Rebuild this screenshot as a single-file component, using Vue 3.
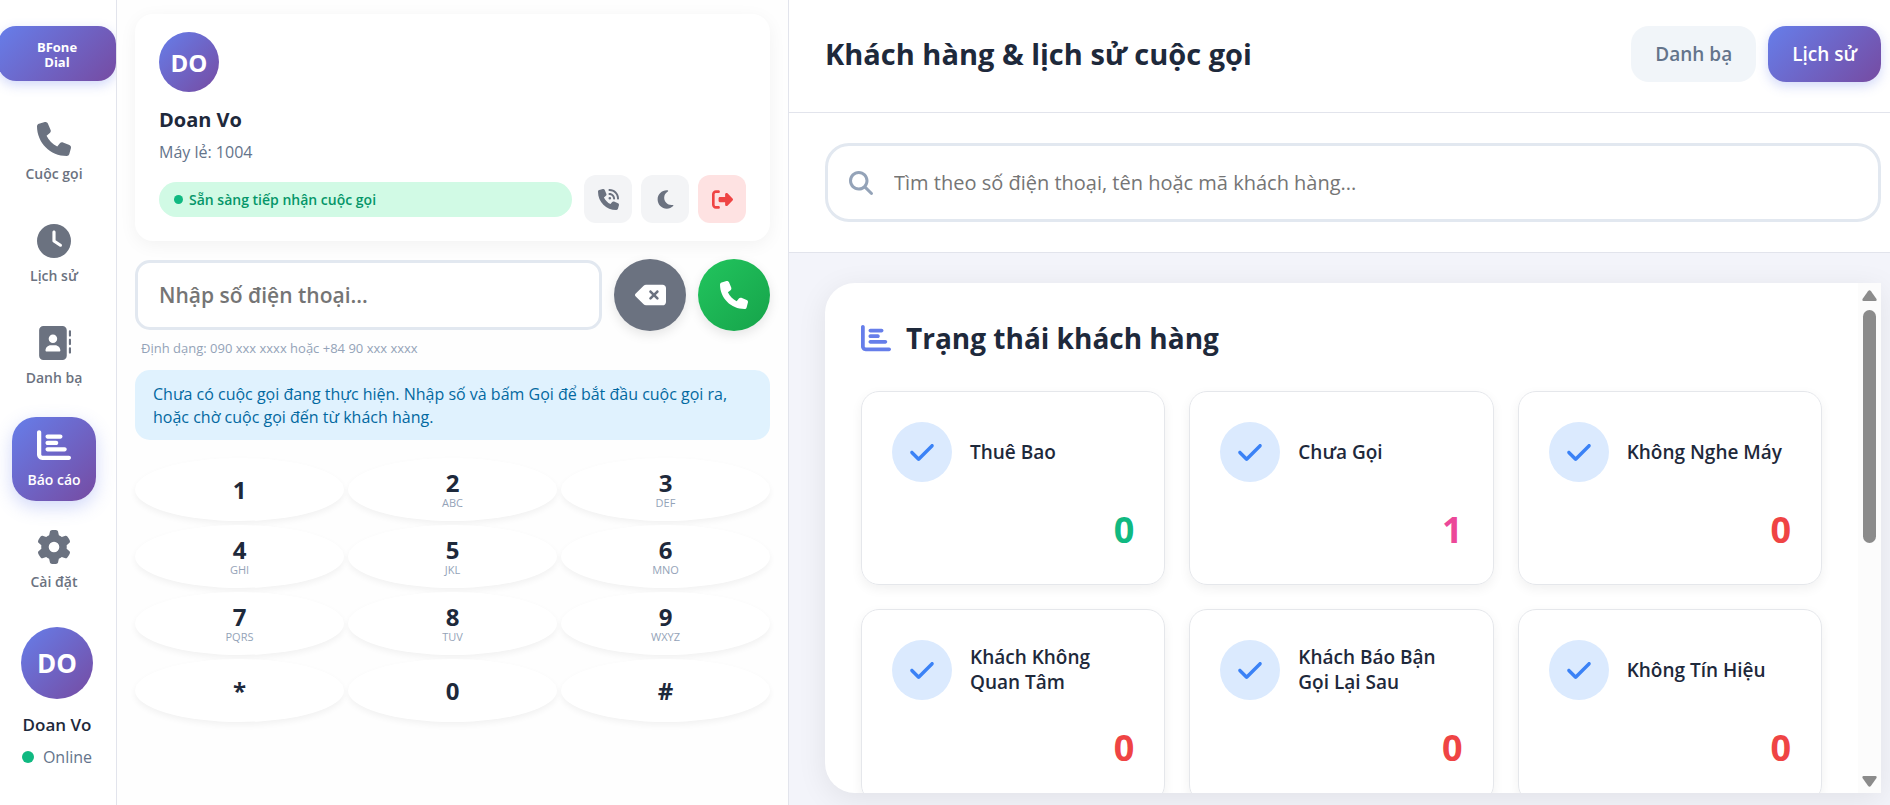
<template>
  <div class="app-shell">
    <aside class="sidebar">
      <div class="brand">BFone<br />Dial</div>

      <nav class="nav">
        <button
          v-for="item in navItems"
          :key="item.label"
          type="button"
          class="nav-item"
          :class="{ active: item.label === activeNav }"
          @click="activeNav = item.label"
        >
          <svg class="nav-icon" viewBox="0 0 512 512" aria-hidden="true"><path :d="icons[item.icon]" /></svg>
          <span>{{ item.label }}</span>
        </button>
      </nav>

      <div class="avatar avatar-lg">DO</div>
      <div class="sidebar-name">Doan Vo</div>
      <div class="sidebar-status"><span class="online-dot"></span>Online</div>
    </aside>

    <section class="dialer">
      <div class="agent-card">
        <div class="avatar">DO</div>
        <div class="agent-name">Doan Vo</div>
        <div class="agent-ext">Máy lẻ: 1004</div>
        <div class="agent-row">
          <div class="agent-state"><span class="state-dot"></span>Sẵn sàng tiếp nhận cuộc gọi</div>
          <div class="agent-actions">
            <button type="button" class="action" aria-label="Nhận cuộc gọi">
              <svg class="action-icon" viewBox="0 0 512 512" aria-hidden="true"><path :d="icons.phoneVolume" /></svg>
            </button>
            <button type="button" class="action" aria-label="Tạm nghỉ">
              <svg class="action-icon" viewBox="-64 0 512 512" aria-hidden="true"><path :d="icons.moon" /></svg>
            </button>
            <button type="button" class="action danger" aria-label="Đăng xuất">
              <svg class="action-icon" viewBox="0 0 512 512" aria-hidden="true"><path :d="icons.logout" /></svg>
            </button>
          </div>
        </div>
      </div>

      <div class="dial-row">
        <input
          v-model="number"
          class="dial-input"
          type="tel"
          placeholder="Nhập số điện thoại..."
          aria-label="Số điện thoại"
        />
        <button type="button" class="round" aria-label="Xóa" @click="number = number.slice(0, -1)">
          <svg class="erase-icon" viewBox="0 0 576 512" aria-hidden="true"><path :d="icons.erase" /></svg>
        </button>
        <button type="button" class="round call" aria-label="Gọi">
          <svg class="call-icon" viewBox="0 0 512 512" aria-hidden="true"><path :d="icons.phone" /></svg>
        </button>
      </div>
      <div class="dial-hint">Định dạng: 090 xxx xxxx hoặc +84 90 xxx xxxx</div>

      <div class="call-info">
        Chưa có cuộc gọi đang thực hiện. Nhập số và bấm Gọi để bắt đầu cuộc gọi ra,
        hoặc chờ cuộc gọi đến từ khách hàng.
      </div>

      <div class="keypad">
        <button v-for="key in keys" :key="key.digit" type="button" class="key" @click="number += key.digit">
          <span class="key-digit">{{ key.digit }}</span>
          <span v-if="key.letters" class="key-letters">{{ key.letters }}</span>
        </button>
      </div>
    </section>

    <main class="main">
      <header class="main-header">
        <h1>Khách hàng &amp; lịch sử cuộc gọi</h1>
        <div class="tabs">
          <button type="button" class="tab">Danh bạ</button>
          <button type="button" class="tab active">Lịch sử</button>
        </div>
      </header>

      <div class="search-bar">
        <label class="search">
          <svg class="search-icon" viewBox="0 0 512 512" aria-hidden="true"><path :d="icons.search" /></svg>
          <input
            v-model="query"
            type="text"
            placeholder="Tìm theo số điện thoại, tên hoặc mã khách hàng..."
            aria-label="Tìm kiếm khách hàng"
          />
        </label>
      </div>

      <div class="content">
        <div class="panel">
          <div class="panel-body">
            <h2>
              <svg class="title-icon" viewBox="0 0 512 512" aria-hidden="true"><path :d="icons.chart" /></svg>
              Trạng thái khách hàng
            </h2>
            <div class="status-grid">
              <div v-for="status in statuses" :key="status.label" class="status-card">
                <div class="status-head">
                  <span class="status-icon">
                    <svg viewBox="0 0 448 512" aria-hidden="true"><path :d="icons.check" /></svg>
                  </span>
                  <span class="status-label">{{ status.label }}</span>
                </div>
                <div class="status-count" :class="status.tone">{{ status.count }}</div>
              </div>
            </div>
          </div>
          <div class="scrollbar" aria-hidden="true">
            <svg class="scroll-arrow" viewBox="0 0 15 11"><path d="M6 1.2Q7.5-.6 9 1.2L14.5 9Q15 11 13.5 11H1.5Q0 11 .5 9Z" /></svg>
            <div class="scroll-track"><div class="scroll-thumb"></div></div>
            <svg class="scroll-arrow" viewBox="0 0 15 11"><path d="M6 9.8Q7.5 11.6 9 9.8L14.5 2Q15 0 13.5 0H1.5Q0 0 .5 2Z" /></svg>
          </div>
        </div>
      </div>
    </main>
  </div>
</template>

<script setup>
import { ref } from "vue";

const activeNav = ref("Báo cáo");
const number = ref("");
const query = ref("");

const navItems = [
  { label: "Cuộc gọi", icon: "phone" },
  { label: "Lịch sử", icon: "clock" },
  { label: "Danh bạ", icon: "book" },
  { label: "Báo cáo", icon: "chart" },
  { label: "Cài đặt", icon: "gear" },
];

const keys = [
  { digit: "1", letters: "" },
  { digit: "2", letters: "ABC" },
  { digit: "3", letters: "DEF" },
  { digit: "4", letters: "GHI" },
  { digit: "5", letters: "JKL" },
  { digit: "6", letters: "MNO" },
  { digit: "7", letters: "PQRS" },
  { digit: "8", letters: "TUV" },
  { digit: "9", letters: "WXYZ" },
  { digit: "*", letters: "" },
  { digit: "0", letters: "" },
  { digit: "#", letters: "" },
];

const statuses = [
  { label: "Thuê Bao", count: 0, tone: "green" },
  { label: "Chưa Gọi", count: 1, tone: "pink" },
  { label: "Không Nghe Máy", count: 0, tone: "red" },
  { label: "Khách Không Quan Tâm", count: 0, tone: "red" },
  { label: "Khách Báo Bận Gọi Lại Sau", count: 0, tone: "red" },
  { label: "Không Tín Hiệu", count: 0, tone: "red" },
];

const icons = {
  phone:
    "M164.9 24.6c-7.7-18.6-28-28.5-47.4-23.2l-88 24C12.1 30.2 0 46 0 64C0 311.4 200.6 512 448 512c18 0 33.8-12.1 38.6-29.5l24-88c5.3-19.4-4.6-39.7-23.2-47.4l-96-40c-16.3-6.8-35.2-2.1-46.3 11.6L304.7 368C234.3 334.7 177.3 277.7 144 207.3L193.3 167c13.7-11.2 18.4-30 11.6-46.3l-40-96z",
  clock:
    "M256 0a256 256 0 1 1 0 512A256 256 0 1 1 256 0zM232 120V256c0 8 4 15.5 10.7 20l96 64c11 7.4 25.9 4.4 33.3-6.7s4.4-25.9-6.7-33.3L280 243.2V120c0-13.3-10.7-24-24-24s-24 10.7-24 24z",
  book:
    "M96 0C60.7 0 32 28.7 32 64V448c0 35.3 28.7 64 64 64H384c35.3 0 64-28.7 64-64V64c0-35.3-28.7-64-64-64H96zM208 288h64c44.2 0 80 35.8 80 80c0 8.8-7.2 16-16 16H144c-8.8 0-16-7.2-16-16c0-44.2 35.8-80 80-80zm-32-96a64 64 0 1 1 128 0 64 64 0 1 1 -128 0zM512 80c0-8.8-7.2-16-16-16s-16 7.2-16 16v64c0 8.8 7.2 16 16 16s16-7.2 16-16V80zM496 192c-8.8 0-16 7.2-16 16v64c0 8.8 7.2 16 16 16s16-7.2 16-16V208c0-8.8-7.2-16-16-16zm16 144c0-8.8-7.2-16-16-16s-16 7.2-16 16v64c0 8.8 7.2 16 16 16s16-7.2 16-16V336z",
  chart:
    "M32 32c17.7 0 32 14.3 32 32V400c0 8.8 7.2 16 16 16H480c17.7 0 32 14.3 32 32s-14.3 32-32 32H80c-44.2 0-80-35.8-80-80V64C0 46.3 14.3 32 32 32zm96 96c0-17.7 14.3-32 32-32l192 0c17.7 0 32 14.3 32 32s-14.3 32-32 32l-192 0c-17.7 0-32-14.3-32-32zm32 64H288c17.7 0 32 14.3 32 32s-14.3 32-32 32H160c-17.7 0-32-14.3-32-32s14.3-32 32-32zm0 96H416c17.7 0 32 14.3 32 32s-14.3 32-32 32H160c-17.7 0-32-14.3-32-32s14.3-32 32-32z",
  gear:
    "M495.9 166.6c3.2 8.7 .5 18.4-6.4 24.6l-43.3 39.4c1.1 8.3 1.7 16.8 1.7 25.4s-.6 17.1-1.7 25.4l43.3 39.4c6.9 6.2 9.6 15.9 6.4 24.6c-4.4 11.9-9.7 23.3-15.8 34.3l-4.7 8.1c-6.6 11-14 21.4-22.1 31.2c-5.9 7.2-15.7 9.6-24.5 6.8l-55.7-17.7c-13.4 10.3-28.2 18.9-44 25.4l-12.5 57.1c-2 9.1-9 16.3-18.2 17.8c-13.8 2.3-28 3.5-42.5 3.5s-28.7-1.2-42.5-3.5c-9.2-1.5-16.2-8.7-18.2-17.8l-12.5-57.1c-15.8-6.5-30.6-15.1-44-25.4L83.1 425.9c-8.8 2.8-18.6 .3-24.5-6.8c-8.1-9.8-15.5-20.2-22.1-31.2l-4.7-8.1c-6.1-11-11.4-22.4-15.8-34.3c-3.2-8.7-.5-18.4 6.4-24.6l43.3-39.4C64.6 273.1 64 264.6 64 256s.6-17.1 1.7-25.4L22.4 191.2c-6.9-6.2-9.6-15.9-6.4-24.6c4.4-11.9 9.7-23.3 15.8-34.3l4.7-8.1c6.6-11 14-21.4 22.1-31.2c5.9-7.2 15.7-9.6 24.5-6.8l55.7 17.7c13.4-10.3 28.2-18.9 44-25.4l12.5-57.1c2-9.1 9-16.3 18.2-17.8C227.3 1.2 241.5 0 256 0s28.7 1.2 42.5 3.5c9.2 1.5 16.2 8.7 18.2 17.8l12.5 57.1c15.8 6.5 30.6 15.1 44 25.4l55.7-17.7c8.8-2.8 18.6-.3 24.5 6.8c8.1 9.8 15.5 20.2 22.1 31.2l4.7 8.1c6.1 11 11.4 22.4 15.8 34.3zM256 336a80 80 0 1 0 0-160 80 80 0 1 0 0 160z",
  phoneVolume:
    "M280 0C408.1 0 512 103.9 512 232c0 13.3-10.7 24-24 24s-24-10.7-24-24c0-101.6-82.4-184-184-184c-13.3 0-24-10.7-24-24s10.7-24 24-24zm8 192a32 32 0 1 1 0 64 32 32 0 1 1 0-64zm-32-72c0-13.3 10.7-24 24-24c75.1 0 136 60.9 136 136c0 13.3-10.7 24-24 24s-24-10.7-24-24c0-48.6-39.4-88-88-88c-13.3 0-24-10.7-24-24zM117.5 1.4c19.4-5.3 39.7 4.6 47.4 23.2l40 96c6.8 16.3 2.1 35.2-11.6 46.3L144 207.3c33.3 70.4 90.3 127.4 160.7 160.7L345 318.7c11.2-13.7 30-18.4 46.3-11.6l96 40c18.6 7.7 28.5 28 23.2 47.4l-24 88C481.8 499.9 466 512 448 512C200.6 512 0 311.4 0 64C0 46 12.1 30.2 29.5 25.4l88-24z",
  moon:
    "M223.5 32C100 32 0 132.3 0 256S100 480 223.5 480c60.6 0 115.5-24.2 155.8-63.4c5-4.9 6.3-12.5 3.1-18.7s-10.1-9.7-17-8.5c-9.8 1.7-19.8 2.6-30.1 2.6c-96.9 0-175.5-78.8-175.5-176c0-65.8 36-123.1 89.3-153.3c6.1-3.5 9.2-10.5 7.7-17.3s-7.3-11.9-14.3-12.5c-6.3-.5-12.6-.8-19-.8z",
  logout:
    "M377.9 105.9L500.7 228.7c7.2 7.2 11.3 17.1 11.3 27.3s-4.1 20.1-11.3 27.3L377.9 406.1c-6.4 6.4-15 9.9-24 9.9c-18.7 0-33.9-15.2-33.9-33.9l0-62.1-128 0c-17.7 0-32-14.3-32-32l0-64c0-17.7 14.3-32 32-32l128 0 0-62.1c0-18.7 15.2-33.9 33.9-33.9c9 0 17.6 3.6 24 9.9zM160 96L96 96c-17.7 0-32 14.3-32 32l0 256c0 17.7 14.3 32 32 32l64 0c17.7 0 32 14.3 32 32s-14.3 32-32 32l-64 0c-53 0-96-43-96-96L0 128C0 75 43 32 96 32l64 0c17.7 0 32 14.3 32 32s-14.3 32-32 32z",
  erase:
    "M576 128c0-35.3-28.7-64-64-64L205.3 64c-17 0-33.3 6.7-45.3 18.7L9.4 233.4c-6 6-9.4 14.1-9.4 22.6s3.4 16.6 9.4 22.6L160 429.3c12 12 28.3 18.7 45.3 18.7L512 448c35.3 0 64-28.7 64-64l0-256zM271 175c9.4-9.4 24.6-9.4 33.9 0l47 47 47-47c9.4-9.4 24.6-9.4 33.9 0s9.4 24.6 0 33.9l-47 47 47 47c9.4 9.4 9.4 24.6 0 33.9s-24.6 9.4-33.9 0l-47-47-47 47c-9.4 9.4-24.6 9.4-33.9 0s-9.4-24.6 0-33.9l47-47-47-47c-9.4-9.4-9.4-24.6 0-33.9z",
  search:
    "M416 208c0 45.9-14.9 88.3-40 122.7L502.6 457.4c12.5 12.5 12.5 32.8 0 45.3s-32.8 12.5-45.3 0L330.7 376c-34.4 25.2-76.8 40-122.7 40C93.1 416 0 322.9 0 208S93.1 0 208 0S416 93.1 416 208zM208 352a144 144 0 1 0 0-288 144 144 0 1 0 0 288z",
  check:
    "M438.6 105.4c12.5 12.5 12.5 32.8 0 45.3l-256 256c-12.5 12.5-32.8 12.5-45.3 0l-128-128c-12.5-12.5-12.5-32.8 0-45.3s32.8-12.5 45.3 0L160 338.7 393.4 105.4c12.5-12.5 32.8-12.5 45.3 0z",
};
</script>

<style>
body {
  margin: 0;
  overflow: hidden;
}
</style>

<style scoped>
.app-shell,
.app-shell * {
  box-sizing: border-box;
}

.app-shell {
  display: flex;
  height: 100vh;
  background: #fff;
  color: #1e293b;
  font-family: "Segoe UI", "Open Sans", "Noto Sans", sans-serif;
}

button,
input {
  font-family: inherit;
}

button {
  border: none;
  padding: 0;
  cursor: pointer;
}

svg {
  display: block;
  flex: none;
  fill: currentColor;
}

/* sidebar */
.sidebar {
  flex: none;
  width: 117px;
  padding: 26px 14px 0 12px;
  border-right: 1px solid #e2e4ec;
  display: flex;
  flex-direction: column;
  align-items: center;
  overflow: hidden;
}

.brand {
  flex: none;
  width: 118px;
  padding: 14px 0 11px;
  border-radius: 18px;
  background: linear-gradient(135deg, #667eea, #764ba2);
  box-shadow: 0 4px 12px rgba(102, 126, 234, 0.3);
  color: #fff;
  font-size: 13px;
  font-weight: 700;
  line-height: 15px;
  text-align: center;
}

.nav {
  align-self: flex-start;
  width: 84px;
  margin: 30px 0 24px;
  display: flex;
  flex-direction: column;
  gap: 18px;
}

.nav-item {
  height: 84px;
  padding-top: 11px;
  border-radius: 24px;
  background: none;
  color: #6b7280;
  display: flex;
  flex-direction: column;
  align-items: center;
  gap: 8px;
  font-size: 14px;
  font-weight: 600;
  line-height: 20px;
  white-space: nowrap;
}

.nav-item.active {
  background: linear-gradient(135deg, #667eea, #764ba2);
  box-shadow: 0 6px 18px rgba(102, 126, 234, 0.3);
  color: #fff;
}

.nav-icon {
  width: 34px;
  height: 34px;
}

.avatar {
  flex: none;
  width: 60px;
  height: 60px;
  border-radius: 50%;
  background: linear-gradient(135deg, #667eea, #764ba2);
  color: #fff;
  display: flex;
  align-items: center;
  justify-content: center;
  font-size: 24px;
  font-weight: 700;
}

.avatar-lg {
  width: 72px;
  height: 72px;
  font-size: 26px;
}

.sidebar-name {
  margin-top: 14px;
  font-size: 17px;
  font-weight: 600;
  line-height: 24px;
}

.sidebar-status {
  margin-top: 8px;
  display: flex;
  align-items: center;
  gap: 9px;
  color: #64748b;
  font-size: 16px;
  line-height: 24px;
}

.online-dot {
  width: 12px;
  height: 12px;
  border-radius: 50%;
  background: #10b981;
}

/* dialer */
.dialer {
  flex: none;
  width: 672px;
  padding: 14px 18px;
  border-right: 1px solid #e2e4ec;
  background: #fefefe;
}

.agent-card {
  padding: 18px 24px;
  border-radius: 18px;
  background: #fff;
  box-shadow: 0 4px 18px rgba(0, 0, 0, 0.05);
}

.agent-name {
  margin-top: 14px;
  font-size: 20px;
  font-weight: 700;
  line-height: 28px;
}

.agent-ext {
  margin: 6px 0 11px;
  color: #64748b;
  font-size: 16px;
  line-height: 24px;
}

.agent-row {
  display: flex;
  align-items: center;
  gap: 12px;
}

.agent-state {
  flex: 1;
  height: 35px;
  padding: 0 15px;
  border-radius: 18px;
  background: #d1fae5;
  color: #059669;
  display: flex;
  align-items: center;
  gap: 6px;
  font-size: 14px;
  font-weight: 600;
}

.state-dot {
  width: 9px;
  height: 9px;
  border-radius: 50%;
  background: #10b981;
}

.agent-actions {
  display: flex;
  gap: 9px;
}

.action {
  width: 48px;
  height: 48px;
  border-radius: 12px;
  background: #f3f4f6;
  color: #6b7280;
  display: flex;
  align-items: center;
  justify-content: center;
}

.action.danger {
  background: #fee2e2;
  color: #ef4444;
}

.action-icon {
  width: 21px;
  height: 21px;
}

.dial-row {
  margin-top: 18px;
  display: flex;
  align-items: center;
  gap: 12px;
}

.dial-input {
  flex: 1;
  min-width: 0;
  height: 70px;
  padding: 0 21px;
  border: 3px solid #e2e8f0;
  border-radius: 15px;
  background: #fff;
  color: #1e293b;
  font-size: 21px;
  font-weight: 600;
  outline: none;
}

.dial-input::placeholder,
.search input::placeholder {
  color: #757575;
}

.round {
  flex: none;
  width: 72px;
  height: 72px;
  border-radius: 50%;
  background: #6b7280;
  box-shadow: 0 4px 12px rgba(0, 0, 0, 0.1);
  color: #fff;
  display: flex;
  align-items: center;
  justify-content: center;
}

.round.call {
  background: linear-gradient(135deg, #22c55e, #16a34a);
}

.erase-icon {
  width: 31px;
  height: 28px;
}

.call-icon {
  width: 28px;
  height: 28px;
}

.dial-hint {
  margin: 7px 0 12px;
  padding-left: 6px;
  color: #94a3b8;
  font-size: 13px;
  line-height: 20px;
}

.call-info {
  padding: 13px 18px 11px;
  border-radius: 15px;
  background: #e0f2fe;
  color: #0369a1;
  font-size: 16px;
  line-height: 23px;
}

.keypad {
  margin-top: 18px;
  display: grid;
  grid-template-columns: repeat(3, 1fr);
  gap: 4px;
}

.key {
  height: 63px;
  border-radius: 50%;
  background: #fff;
  box-shadow: 0 3px 6px rgba(0, 0, 0, 0.05);
  display: flex;
  flex-direction: column;
  align-items: center;
  justify-content: center;
}

.key-digit {
  color: #1e293b;
  font-size: 24px;
  font-weight: 700;
  line-height: 26px;
}

.key-letters {
  color: #94a3b8;
  font-size: 11px;
  line-height: 13px;
}

/* customers */
.main {
  flex: 1;
  min-width: 0;
  display: flex;
  flex-direction: column;
  background: #f3f4fa;
}

.main-header {
  padding: 26px 9px 30px 36px;
  border-bottom: 1px solid #e2e4ec;
  background: #fff;
  display: flex;
  align-items: center;
  justify-content: space-between;
}

h1 {
  margin: 0;
  font-size: 29px;
  font-weight: 700;
  line-height: 38px;
}

.tabs {
  display: flex;
  gap: 12px;
}

.tab {
  height: 56px;
  padding: 0 24px;
  border-radius: 18px;
  background: #f1f5f9;
  color: #64748b;
  font-size: 19px;
  font-weight: 600;
}

.tab.active {
  background: linear-gradient(135deg, #667eea, #764ba2);
  box-shadow: 0 4px 12px rgba(102, 126, 234, 0.3);
  color: #fff;
}

.search-bar {
  padding: 30px 9px 30px 36px;
  border-bottom: 1px solid #e2e4ec;
  background: #fff;
}

.search {
  height: 79px;
  padding: 0 21px;
  border: 3px solid #e2e8f0;
  border-radius: 24px;
  display: flex;
  align-items: center;
  gap: 21px;
}

.search-icon {
  width: 24px;
  height: 24px;
  color: #94a3b8;
}

.search input {
  flex: 1;
  min-width: 0;
  padding: 0;
  border: none;
  outline: none;
  background: none;
  color: #1e293b;
  font-size: 20px;
}

.content {
  flex: 1;
  min-height: 0;
  padding: 30px 9px 12px 36px;
}

.panel {
  height: 100%;
  border-radius: 30px 0 0 30px;
  background: #fff;
  box-shadow: 0 6px 30px rgba(0, 0, 0, 0.08);
  display: flex;
  overflow: hidden;
}

.panel-body {
  flex: 1;
  min-width: 0;
  padding: 36px;
  overflow-y: auto;
  scrollbar-width: none;
}

h2 {
  margin: 0 0 34px;
  display: flex;
  align-items: center;
  gap: 15px;
  font-size: 28px;
  font-weight: 700;
  line-height: 38px;
}

.title-icon {
  width: 30px;
  height: 30px;
  color: #667eea;
}

.status-grid {
  display: grid;
  grid-template-columns: repeat(3, 1fr);
  gap: 24px;
}

.status-card {
  padding: 30px;
  border: 1px solid #e5e7eb;
  border-radius: 18px;
  box-shadow: 0 4px 12px rgba(0, 0, 0, 0.06);
}

.status-head {
  display: flex;
  align-items: center;
  gap: 18px;
}

.status-icon {
  flex: none;
  width: 60px;
  height: 60px;
  border-radius: 50%;
  background: #dbeafe;
  color: #3b82f6;
  display: flex;
  align-items: center;
  justify-content: center;
}

.status-icon svg {
  width: 24px;
  height: 27px;
}

.status-label {
  font-size: 19px;
  font-weight: 600;
  line-height: 25px;
}

.status-count {
  margin-top: 24px;
  font-size: 36px;
  font-weight: 700;
  line-height: 48px;
  text-align: right;
}

.status-count.green {
  color: #10b981;
}

.status-count.pink {
  color: #ec4899;
}

.status-count.red {
  color: #ef4444;
}

.scrollbar {
  flex: none;
  width: 23px;
  padding: 7px 0 6px;
  background: #fcfcfc;
  display: flex;
  flex-direction: column;
  align-items: center;
  gap: 9px;
}

.scroll-arrow {
  width: 15px;
  height: 11px;
  color: #8b8b8b;
}

.scroll-track {
  flex: 1;
  width: 13px;
}

.scroll-thumb {
  height: 51%;
  border-radius: 7px;
  background: #8b8b8b;
}
</style>
